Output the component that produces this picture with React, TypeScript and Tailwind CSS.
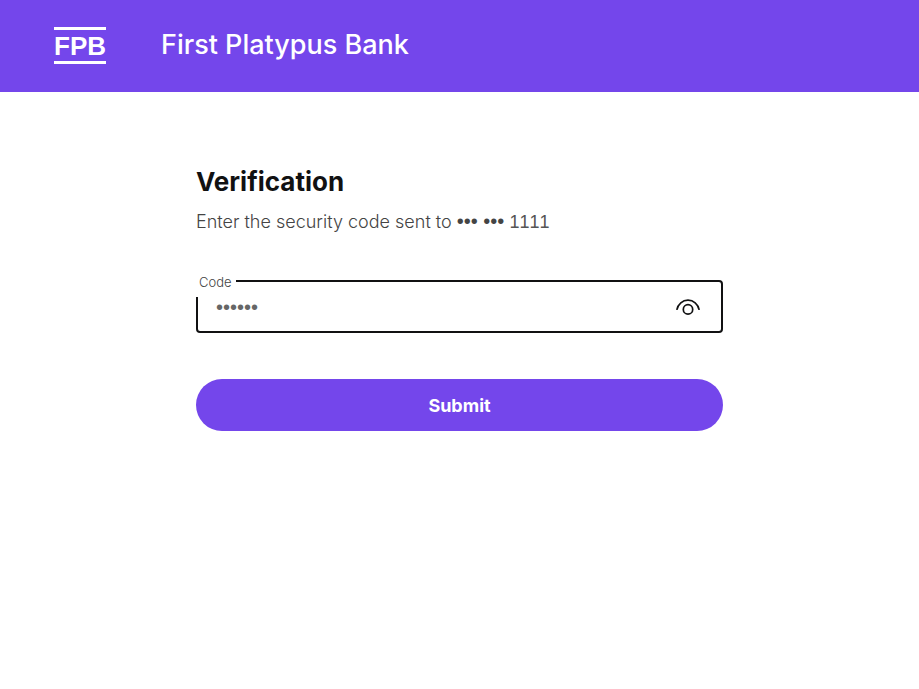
import { useState } from "react";

function Logo() {
  return (
    <span className="flex h-[37px] w-13 items-center justify-center border-y-3 border-white font-['Liberation_Sans',Arial,sans-serif] text-[26px] font-bold leading-none">
      FPB
    </span>
  );
}

export default function App() {
  const [code, setCode] = useState("123456");
  const [visible, setVisible] = useState(false);

  return (
    <div className="min-h-screen bg-white font-[Inter,'Liberation_Sans',sans-serif] text-[#111112]">
      <header className="flex h-23 items-center gap-[55px] bg-[#7446eb] px-[54px] pb-px text-white">
        <Logo />
        <span className="pb-0.5 text-[27px] font-medium leading-8">First Platypus Bank</span>
      </header>
      <main className="mx-auto max-w-[559px] px-4 pt-18">
        <h1 className="text-[26px] font-bold leading-9">Verification</h1>
        <p className="mt-2 text-[18px] font-light leading-7 text-[#444]">
          Enter the security code sent to{" "}
          <span className="font-['Liberation_Sans',Arial,sans-serif] text-[20px] leading-none">••• •••</span>{" "}
          <span className="font-['Liberation_Sans',Arial,sans-serif] leading-none text-[#555] [font-kerning:none]">1111</span>
        </p>
        <form onSubmit={(e) => e.preventDefault()}>
          <div className="relative mt-11 flex h-[53px] items-center rounded border-2 border-[#111112] pr-[17px] pl-[18px]">
            <label
              htmlFor="code"
              className="absolute -top-2.5 -left-0.5 w-10 bg-white pb-[5px] pl-[3px] text-[13px] font-light leading-5 text-[#444]"
            >
              Code
            </label>
            <input
              id="code"
              type={visible ? "text" : "password"}
              value={code}
              onChange={(e) => setCode(e.target.value)}
              className="min-w-0 flex-1 bg-transparent font-['Liberation_Sans',Arial,sans-serif] text-[20px] leading-7 text-[#666] outline-none"
            />
            <button
              type="button"
              aria-label="Show code"
              aria-pressed={visible}
              onClick={() => setVisible(!visible)}
              className="flex size-8 items-center justify-center"
            >
              <svg width="26" height="20" viewBox="0 0 26 20" fill="none" stroke="#111112" strokeWidth="1.7">
                <path d="M1.800 12.800C3 7 7.600 3.200 13 3.200S23 7 24.200 12.800" />
                <circle cx="13" cy="12.400" r="4.700" />
              </svg>
            </button>
          </div>
          <button
            type="submit"
            className="mt-[46px] h-13 w-full rounded-full bg-[#7446eb] text-[18px] font-bold text-white"
          >
            Submit
          </button>
        </form>
      </main>
    </div>
  );
}
